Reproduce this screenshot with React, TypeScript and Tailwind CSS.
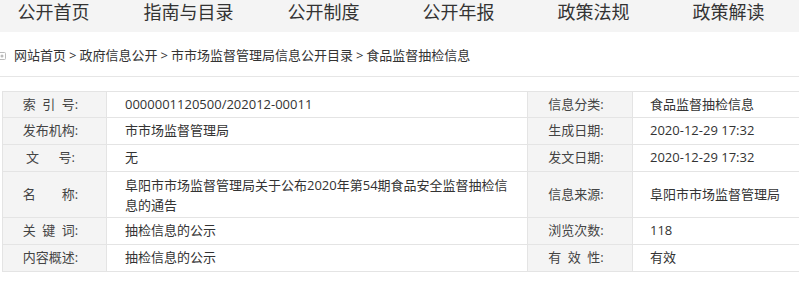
import React from 'react';

const navItems = ['公开首页', '指南与目录', '公开制度', '公开年报', '政策法规', '政策解读'];

const crumbs = ['网站首页', '政府信息公开', '市市场监督管理局信息公开目录', '食品监督抽检信息'];

type Row = {
  label: string;
  value: React.ReactNode;
  label2: string;
  value2: string;
  h: string;
};

const rows: Row[] = [
  { label: '索\u2002引\u2002号:', value: '0000001120500/202012-00011', label2: '信息分类:', value2: '食品监督抽检信息', h: 'h-[26px]' },
  { label: '发布机构:', value: '市市场监督管理局', label2: '生成日期:', value2: '2020-12-29 17:32', h: 'h-[27px]' },
  { label: '文\u3000\u2002号:', value: '无', label2: '发文日期:', value2: '2020-12-29 17:32', h: 'h-[27px]' },
  {
    label: '名\u3000\u3000称:',
    value: (
      <div className="w-[390px] leading-[20px]">
        阜阳市市场监督管理局关于公布2020年第54期食品安全监督抽检信息的通告
      </div>
    ),
    label2: '信息来源:',
    value2: '阜阳市市场监督管理局',
    h: 'h-[46px]',
  },
  { label: '关\u2002键\u2002词:', value: '抽检信息的公示', label2: '浏览次数:', value2: '118', h: 'h-[27px]' },
  { label: '内容概述:', value: '抽检信息的公示', label2: '有\u2002效\u2002性:', value2: '有效', h: 'h-[27px]' },
];

const font = 'font-["Open_Sans","Noto_Sans_CJK_SC",sans-serif]';

// Info table at the bottom, label cells grey, value cells white
const InfoTable = () => (
  <div className="ml-[2px] border-t border-l border-[#e4e4e4] text-[13px]">
    {rows.map((r, i) => (
      <div key={`info_row_${i}`} className={`flex ${r.h} border-b border-[#e4e4e4]`}>
        <div className="flex w-[104px] shrink-0 items-center justify-center whitespace-pre border-r border-[#e4e4e4] bg-[#f4f4f4] pr-[8px] text-[#444]">
          {r.label}
        </div>
        <div className="flex w-[421px] shrink-0 items-center border-r border-[#e4e4e4] pl-[18px] text-[#333]">
          {r.value}
        </div>
        <div className="flex w-[105px] shrink-0 items-center justify-center whitespace-pre border-r border-[#e4e4e4] bg-[#f4f4f4] pr-[8px] text-[#444]">
          {r.label2}
        </div>
        <div className="flex flex-1 items-center pl-[17px] text-[#333]">{r.value2}</div>
      </div>
    ))}
  </div>
);

export default function App() {
  return (
    <div className={`h-[288px] w-[799px] overflow-hidden bg-white ${font}`}>
      <div className="h-[32px] overflow-hidden bg-[#f4f4f4]">
        <div className="-ml-[14px] flex">
          {navItems.map((n) => (
            <div key={n} className="w-[135px] shrink-0 text-center text-[18px] leading-[25px] text-[#333]">
              {n}
            </div>
          ))}
        </div>
      </div>

      <div className="flex h-[45px] items-center border-b border-[#e6e6e6] pt-[3px] text-[13px] text-[#333]">
        <svg width="9" height="10" viewBox="0 0 9 10" className="-ml-[2px] mr-[7px] shrink-0">
          <rect x="0.5" y="1.5" width="7" height="7" rx="1" fill="none" stroke="#bbb" />
          <circle cx="4" cy="5" r="1.5" fill="#bbb" />
        </svg>
        {crumbs.map((c, i) => (
          <React.Fragment key={c}>
            {i > 0 && <span className="px-[3px]">&gt;</span>}
            <span>{c}</span>
          </React.Fragment>
        ))}
      </div>

      <div className="mt-[14px]">
        <InfoTable />
      </div>
    </div>
  );
}
